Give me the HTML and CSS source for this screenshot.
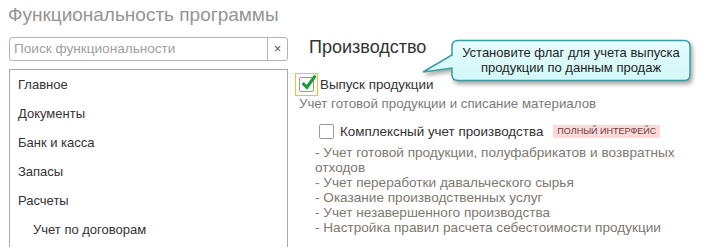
FILE: index.html
```html
<!DOCTYPE html>
<html lang="ru">
  <head>
    <meta charset="UTF-8" />
    <title>Функциональность программы</title>
    <link rel="stylesheet" href="styles.css">
  </head>
  <body>
    <div class="page">
      <h1 class="title">Функциональность программы</h1>

      <div class="columns">
        <div class="side">
          <div class="search">
            <span class="search-input">Поиск функциональности</span>
            <span class="search-clear">×</span>
          </div>
          <ul class="sections">
            <li>Главное</li>
            <li>Документы</li>
            <li>Банк и касса</li>
            <li>Запасы</li>
            <li>Расчеты</li>
            <li class="sub">Учет по договорам</li>
          </ul>
        </div>

        <div class="main">
          <h2 class="heading">Производство</h2>

          <div class="option option-main">
            <span class="flag-mark">
              <span class="box checked">
                <svg class="tick" width="17" height="17" viewBox="0 0 16 16">
                  <path d="M2.5 8.5 L6.5 12.5 L14.5 1.5" fill="none" stroke="#1d9a3c" stroke-width="3" stroke-linejoin="miter" />
                </svg>
              </span>
            </span>
            <span class="option-label">Выпуск продукции</span>
          </div>
          <div class="hint">Учет готовой продукции и списание материалов</div>

          <div class="option option-sub">
            <span class="box"></span>
            <span class="option-label">Комплексный учет производства</span>
            <span class="badge">Полный интерфейс</span>
          </div>
          <ul class="features">
            <li>- Учет готовой продукции, полуфабрикатов и возвратных отходов</li>
            <li>- Учет переработки давальческого сырья</li>
            <li>- Оказание производственных услуг</li>
            <li>- Учет незавершенного производства</li>
            <li>- Настройка правил расчета себестоимости продукции</li>
          </ul>
        </div>
      </div>

      <!-- подсказка поверх формы -->
      <div class="callout">
        <svg class="callout-shape" width="280" height="52" viewBox="0 0 280 52">
          <defs>
            <linearGradient id="calloutFill" x1="0" y1="0" x2="0" y2="1">
              <stop offset="0" stop-color="#e6fdfd" />
              <stop offset="1" stop-color="#d2f7f8" />
            </linearGradient>
          </defs>
          <path d="M38 3.5 H264 Q270 3.5 270 9.5 V37.5 Q270 43.5 264 43.5 H38 Q32 43.5 32 37.5 V31 L3 35 L32 18 V9.5 Q32 3.5 38 3.5 Z"
                fill="url(#calloutFill)" stroke="#3b9ca5" stroke-width="1.5" />
        </svg>
        <div class="callout-text">Установите флаг для учета выпуска<br />продукции по данным продаж</div>
      </div>
    </div>
  </body>
</html>
```

FILE: styles.css
```css
* {
  padding: 0;
  margin: 0;
  box-sizing: border-box;
}
body {
  background: #fff;
  font-family: "Liberation Sans", Arial, sans-serif;
  font-size: 13px;
  color: #333;
  overflow: hidden;
}
.page {
  position: relative;
  width: 703px;
  height: 247px;
  overflow: hidden;
  padding: 4px 0 0 8px;
}
.title {
  font-size: 19px;
  font-weight: normal;
  line-height: 22px;
  color: #949494;
}
.columns {
  display: flex;
  gap: 7px;
  margin-top: 10px;
}

/* левая колонка */
.side {
  width: 280px;
  padding-left: 1px;
}
.search {
  display: flex;
  height: 24px;
  margin-top: 1px;
  border: 1px solid #b4b4b4;
  border-radius: 3px;
}
.search-input {
  flex: 1;
  padding-left: 4px;
  line-height: 22px;
  font-size: 13.6px;
  color: #a0a0a0;
}
.search-clear {
  width: 20px;
  border-left: 1px solid #b4b4b4;
  text-align: center;
  line-height: 21px;
  font-size: 13px;
  color: #555;
}
.sections {
  list-style: none;
  height: 200px;
  margin-top: 8px;
  border: 1px solid #a8a8a8;
  padding-left: 8px;
}
.sections li {
  height: 29px;
  line-height: 29px;
  color: #333;
}
.sections li.sub {
  padding-left: 15px;
}

/* правая колонка */
.main {
  flex: 1;
}
.heading {
  margin-left: 14px;
  font-size: 18px;
  font-weight: normal;
  line-height: 22px;
  color: #333;
}
.option {
  display: flex;
  align-items: center;
}
.option-label {
  font-size: 13.4px;
}
.option-main {
  margin-top: 15px;
  height: 23px;
}
.flag-mark {
  display: flex;
  align-items: center;
  justify-content: center;
  width: 23px;
  height: 23px;
  border: 1.5px solid #f2c31c;
}
.box {
  position: relative;
  display: inline-block;
  width: 15px;
  height: 15px;
  border: 1px solid #9a9a9a;
  border-radius: 2px;
  background: #fff;
}
.tick {
  position: absolute;
  left: 0;
  top: -4px;
}
.option-main .option-label {
  margin-left: 2px;
}
.hint {
  margin: 0 0 0 4px;
  line-height: 16px;
  font-size: 13.3px;
  color: #7a7a7a;
}
.option-sub {
  height: 16px;
  margin: 11px 0 0 24px;
}
.option-sub .option-label {
  margin-left: 6px;
}
.badge {
  margin-left: 10px;
  padding: 0 4px;
  height: 13px;
  line-height: 13px;
  font-size: 9px;
  text-transform: uppercase;
  background: #fcd9d9;
  color: #6e3c3c;
}
.features {
  list-style: none;
  width: 380px;
  margin: 6px 0 0 20px;
  line-height: 15px;
  font-size: 13.6px;
  color: #7e786e;
}

/* всплывающая подсказка */
.callout {
  position: absolute;
  left: 420px;
  top: 37px;
  width: 280px;
  height: 52px;
}
.callout-shape {
  display: block;
  filter: drop-shadow(2px 3px 2px rgba(0, 0, 0, 0.35));
}
.callout-text {
  position: absolute;
  left: 32px;
  top: 3px;
  width: 238px;
  height: 40px;
  display: flex;
  align-items: center;
  justify-content: center;
  text-align: center;
  line-height: 15px;
  color: #1e1e1e;
}
```
